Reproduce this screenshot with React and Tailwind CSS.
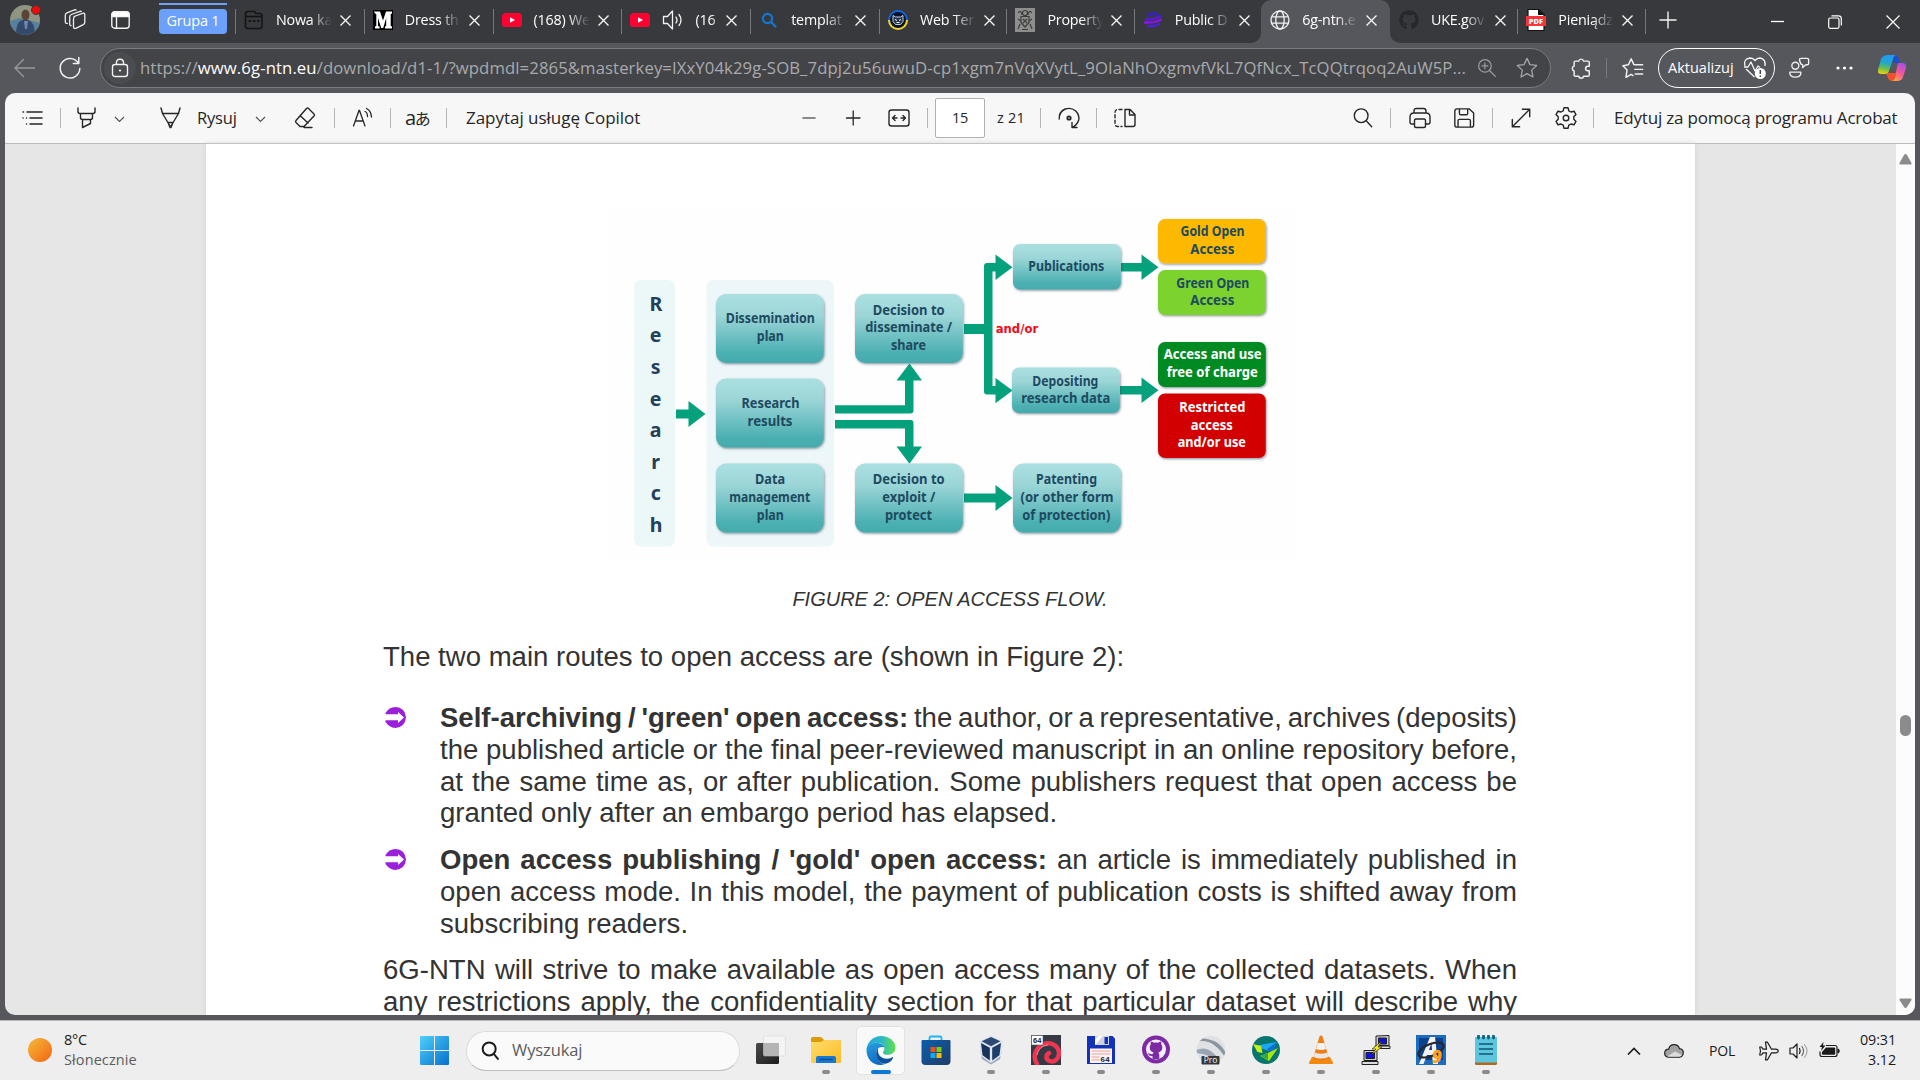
import React from "react";
import { FaGithub } from "react-icons/fa";

const ui = "font-['Open_Sans','Noto_Sans',sans-serif]";

function Icon({ children, className = "", size = 24, sw = 1.3 }) {
  return (
    <svg
      className={`shrink-0 ${className}`}
      width={size}
      height={size}
      viewBox="0 0 24 24"
      fill="none"
      stroke="currentColor"
      strokeWidth={sw}
      strokeLinecap="round"
      strokeLinejoin="round"
    >
      {children}
    </svg>
  );
}

/* ---------- Tab strip ---------- */

const YouTube = () => (
  <svg width="20" height="20" viewBox="0 0 20 20">
    <rect x="0" y="3" width="20" height="14" rx="3.5" fill="#ff0033" />
    <path d="M8 7.2v5.6l5-2.8z" fill="#fff" />
  </svg>
);

const favicons = {
  page: (
    <svg width="20" height="20" viewBox="0 0 20 20" fill="none" stroke="#141416" strokeWidth="1.6">
      <path d="M1.5 4q0-2.500 2.500-2.500h6.500l1.500 2h4q2 0 2 2v10.500q0 2.500-2.500 2.500h-11.500q-2.500 0-2.500-2.500z" />
      <path d="M1.500 6.500h16.500" />
      <path d="M4.500 11h2.500M8.800 11h2.500M13 11h2.500" strokeWidth="2" />
    </svg>
  ),
  m: (
    <div className="flex h-5 w-5 items-center justify-center bg-black">
      <svg width="20" height="20" viewBox="0 0 20 20">
        <path d="M1 1.500h6l3 9 3-9h6v2l-1.300.5v12l1.300.5v2h-7v-2l1.200-.5v-8l-3 10h-2l-3.200-10v8l1.500.5v2h-4.500v-2l1.300-.5v-12l-1.300-.5z" fill="#fff" />
      </svg>
    </div>
  ),
  yt: <YouTube />,
  search: (
    <svg width="20" height="20" viewBox="0 0 20 20" fill="none" stroke="#1377d4" strokeWidth="2.200">
      <circle cx="8.500" cy="8.500" r="4.600" />
      <path d="M12 12l4.500 4.500" strokeLinecap="round" />
    </svg>
  ),
  cat: (
    <svg width="20" height="20" viewBox="0 0 20 20">
      <circle cx="10" cy="10" r="10" fill="#1565e0" />
      <path d="M0 10a10 10 0 0 0 20 0z" fill="#f7d31b" />
      <circle cx="10" cy="10" r="8" fill="#0a1428" />
      <path d="M5 5.500l2.500 1.500h5l2.500-1.500v6l-2.500 3h-5l-2.500-3z" fill="#24344f" stroke="#d8e0ea" strokeWidth=".9" />
      <path d="M7 9.500l2 1M13 9.500l-2 1M8.500 12.500h3" stroke="#fff" strokeWidth="1" />
    </svg>
  ),
  crest: (
    <svg width="20" height="24" viewBox="0 0 20 24" fill="none" stroke="#3c3c3c" strokeWidth="1.200">
      <rect width="20" height="24" fill="#8e8e8e" stroke="none" />
      <circle cx="10" cy="5" r="2.500" />
      <path d="M6 8.500h8v6l-4 4.500-4-4.500zM3 5q3-4 4 2M17 5q-3-4-4 2M3 11l3 2M17 11l-3 2M5 16l-2 5M15 16l2 5M8 11l4 4M12 11l-4 4M7 21.500h6" />
    </svg>
  ),
  swirl: (
    <svg width="20" height="20" viewBox="0 0 20 20" fill="none" strokeLinecap="round">
      <path d="M5 5.500q5-3.500 10-1" stroke="#3320d8" strokeWidth="2.300" />
      <path d="M3 9.500q6 .5 14.500-3" stroke="#5a18e0" strokeWidth="2.300" />
      <path d="M2 12.500q8 1 15.500-2.500" stroke="#8d12f0" strokeWidth="2.300" />
      <path d="M5 16q6 1 11-2" stroke="#4a20dc" strokeWidth="2.300" />
    </svg>
  ),
  globe: (
    <svg width="20" height="20" viewBox="0 0 20 20" fill="none" stroke="#f2f2f2" strokeWidth="1.300">
      <circle cx="10" cy="10" r="9" />
      <ellipse cx="10" cy="10" rx="4.200" ry="9" />
      <path d="M2 6.800h16M2 13.200h16" />
    </svg>
  ),
  github: <FaGithub size={20} color="#24292e" />,
  pdf: (
    <svg width="20" height="22" viewBox="0 0 20 22">
      <path d="M2 .5h11l5 5v16h-16z" fill="#fff" stroke="#111" strokeWidth="1.200" />
      <path d="M12 0v6h6" fill="#111" />
      <rect x="0" y="7" width="20" height="10" fill="#f4353a" />
      <text x="10" y="15" textAnchor="middle" fontSize="7.500" fontWeight="800" fill="#fff" fontFamily="Open Sans, sans-serif">PDF</text>
    </svg>
  ),
};

const tabs = [
  { icon: "page", title: "Nowa ka" },
  { icon: "m", title: "Dress th" },
  { icon: "yt", title: "(168) We" },
  { icon: "yt", title: "(16", audio: true },
  { icon: "search", title: "templat" },
  { icon: "cat", title: "Web Ter" },
  { icon: "crest", title: "Property" },
  { icon: "swirl", title: "Public D" },
  { icon: "globe", title: "6g-ntn.e", active: true },
  { icon: "github", title: "UKE.gov", quiet: true },
  { icon: "pdf", title: "Pieniądz" },
];

function Tab({ icon, title, audio, active, quiet, wide }) {
  return (
    <div className={`relative flex h-[43px] shrink-0 items-center pb-[3px] pl-[9px] ${wide ? "w-[128.8px]" : "w-[127.4px]"} ${active ? "rounded-t-[10px] bg-[#56575c]" : ""}`}>
      {!active && !quiet && <span className="absolute left-0 top-[9px] h-[25px] w-px bg-[#77787b]" />}
      {active && (
        <>
          <svg className="absolute -left-[10px] bottom-0" width="10" height="10"><path d="M10 0v10h-10a10 10 0 0 0 10-10z" fill="#56575c" /></svg>
          <svg className="absolute -right-[10px] bottom-0" width="10" height="10"><path d="M0 0v10h10a10 10 0 0 1-10-10z" fill="#56575c" /></svg>
        </>
      )}
      <span className="flex w-5 shrink-0 justify-center">{favicons[icon]}</span>
      {audio && (
        <svg className="ml-[12px] shrink-0" width="22" height="22" viewBox="0 0 22 22" fill="none" stroke="#f2f2f2" strokeWidth="1.300" strokeLinejoin="round" strokeLinecap="round">
          <path d="M1.500 7.500h4l5-5.500v18l-5-5.500h-4zM14 8q2 3 0 6M17 5.500q4 5.500 0 11" />
        </svg>
      )}
      <span
        className={`whitespace-nowrap text-[14.3px] leading-5 tracking-[-0.2px] text-white ${audio ? "ml-[11px] w-[26px] [mask-image:linear-gradient(to_right,black_60%,#0005)]" : "ml-3 w-[62px] [mask-image:linear-gradient(to_right,black_55%,transparent_90%)]"}`}
      >
        {title}
      </span>
      <svg className="absolute left-[105px] top-[15px]" width="11" height="11" viewBox="0 0 11 11" stroke="#f4f4f4" strokeWidth="1.400">
        <path d="M.5.5l10 10M10.500.5l-10 10" />
      </svg>
    </div>
  );
}

function TabStrip() {
  return (
    <div className="flex h-[43px] items-center bg-[#38393d] text-white">
      <div className="relative mb-[3px] ml-[10px] h-[30px] w-[30px] shrink-0">
        <svg width="30" height="30" viewBox="0 0 30 30">
          <defs><clipPath id="av"><circle cx="15" cy="15" r="15" /></clipPath></defs>
          <g clipPath="url(#av)">
            <rect width="30" height="30" fill="#8f9483" />
            <path d="M0 16l10-3 20 5v12h-30z" fill="#56809c" />
            <path d="M6 30q0-14 7-15h5q7 2 7 15z" fill="#334a6c" />
            <ellipse cx="15.500" cy="10" rx="4" ry="5.500" fill="#5b4436" />
            <path d="M14 16h4l-1 8h-2z" fill="#6d86b5" />
          </g>
        </svg>
        <span className="absolute left-[21px] top-0 h-[10px] w-[10px] rounded-full border border-[#38393d] bg-[#f00a0a]" />
      </div>
      <svg className="mb-[3px] ml-[23px] shrink-0" width="24" height="24" viewBox="0 0 24 24" fill="none" stroke="#eee" strokeWidth="1.300" strokeLinejoin="round">
        <path d="M11 8.500l8.500-3.200q2.300-.7 2.300 1.500v7.500q0 1.700-1.500 2.300l-7 3.500q-2.800 1.200-2.800-1.500v-7.600q0-1.900 1.500-2.500z" />
        <path d="M8.500 17.500q-1.800.5-1.800-1.500v-7q0-1.800 1.600-2.500l8.700-3.200q1-.2 1.500.6" />
        <path d="M4.800 15.200q-2.500.8-2.500-1.500v-6.400q0-1.800 1.600-2.500l7.600-3q1.200-.3 2 .6" />
      </svg>
      <svg className="mb-[3px] ml-[24px] shrink-0" width="19" height="18" viewBox="0 0 19 18" fill="none" stroke="#f4f4f4" strokeWidth="1.400">
        <rect x=".8" y=".8" width="17.400" height="16.400" rx="3" />
        <path d="M1 3.500q0-2.500 2.500-2.500h12q2.500 0 2.500 2.500v2h-17z" fill="#fff" />
        <path d="M5.500 5v12" />
      </svg>
      <div className="ml-[29px] mr-[8px] h-[43px] w-[68px] shrink-0 pt-[3px]">
        <div className="h-[2px] bg-[#6ba0fb]" />
        <div className="mt-[4px] h-[25px] rounded-[4px] bg-[#6ba0fb] text-center text-[14.5px] leading-[23px] tracking-[-0.2px]">Grupa 1</div>
      </div>
      {tabs.map((t, i) => <Tab key={i} wide={i < 5 || t.active} {...t} />)}
      <span className="mb-px h-[25px] w-px bg-[#77787b]" />
      <svg className="mb-[4px] ml-[13px]" width="18" height="18" stroke="#f4f4f4" strokeWidth="1.400"><path d="M9 .5v17M.5 9h17" /></svg>
      <svg className="ml-[94px]" width="13" height="13" stroke="#fff" strokeWidth="1.300"><path d="M0 6.500h13" /></svg>
      <svg className="ml-[44px]" width="14" height="14" viewBox="0 0 14 14" fill="none" stroke="#fff" strokeWidth="1.200">
        <rect x=".7" y="3" width="10.300" height="10.300" rx="1.500" />
        <path d="M3.500.8h7q2.800 0 2.800 2.800v7" />
      </svg>
      <svg className="ml-[44px]" width="14" height="14" stroke="#fff" strokeWidth="1.200"><path d="M.5.5l13 13M13.500.5l-13 13" /></svg>
    </div>
  );
}

/* ---------- Address bar ---------- */

function AddressBar() {
  return (
    <div className="flex h-[50px] items-center bg-[#56575c] text-[#f0f0f0]">
      <Icon className="ml-[13px] text-[#98999c]"><path d="M21.500 12h-19M10.500 3.500l-8.500 8.500 8.500 8.500" /></Icon>
      <Icon className="ml-[21px]" sw={1.5}><path d="M20.800 1.500v6h-5.500M20.300 7a9.800 9.800 0 1 0 1.500 5.500" /></Icon>
      <div className="ml-[18px] flex h-10 w-[1451px] shrink-0 items-center rounded-full border border-[#7b7c80] bg-[#434448]">
        <span className="ml-[3px] flex h-8 w-8 items-center justify-center rounded-full bg-[#4b4c50]">
          <svg width="18" height="20" viewBox="0 0 18 20" fill="none" stroke="#f2f2f2" strokeWidth="1.400">
            <rect x="1.500" y="6.500" width="15" height="12" rx="2.500" />
            <path d="M5.500 6.500v-2q0-3.300 3.500-3.300t3.500 3.300v2" />
            <circle cx="9" cy="12.500" r="1.100" fill="#fff" stroke="none" />
          </svg>
        </span>
        <span className="ml-[4px] w-[1326px] whitespace-nowrap text-[16.7px] leading-6 tracking-[0.105px] text-[#a9aaac]">
          https://<span className="text-white">www.6g-ntn.eu</span>/download/d1-1/?wpdmdl=2865&amp;masterkey=IXxY04k29g-SOB_7dpj2u56uwuD-cp1xgm7nVqXVytL_9OIaNhOxgmvfVkL7QfNcx_TcQQtrqoq2AuW5P...
        </span>
        <Icon size={20} className="ml-[11px] text-[#9b9c9f]" sw={1.5}><circle cx="9.500" cy="9.500" r="7.500" /><path d="M15 15l7 7M9.500 6v7M6 9.500h7" /></Icon>
        <Icon size={22} className="ml-[19px] text-[#a5a6a8]" sw={1.4}><path d="M12 1.500l3.200 6.800 7.300.9-5.400 5.100 1.400 7.500-6.500-3.700-6.500 3.700 1.400-7.500-5.400-5.100 7.300-.9z" /></Icon>
      </div>
      <Icon size={22} className="ml-[19px]" sw={1.6}><path d="M6 4.500h3.500a2.700 2.700 0 0 1 5.300 0h5q1.200 0 1.200 1.200v4.300h-1.500a2.500 2.500 0 0 0 0 5h1.500v4.500q0 1.500-1.200 1.500h-5a2.700 2.700 0 0 1-5.300 0h-3.500q-1.500 0-1.500-1.500v-4.300a2.700 2.700 0 0 1 0-5.200v-4q0-1.500 1.500-1.500z" /></Icon>
      <span className="ml-[14px] h-5 w-px bg-[#7b7c80]" />
      <Icon size={22} className="ml-[15px]" sw={1.6}><path d="M14 8.500l-1-.2-3-6.300-3 6.500-6 1 4.500 4.700-1.200 8 5.700-3.200 2 1.200M15 8.500h7.500M14 13.500h8.500M14.500 18.500h8" /></Icon>
      <div className="ml-[14px] flex h-10 w-[117px] shrink-0 items-center rounded-full border-[1.5px] border-white">
        <span className="ml-[9px] w-[69px] text-[14.5px] tracking-[0px] text-white">Aktualizuj</span>
        <svg className="ml-[6px]" width="24" height="24" viewBox="0 0 24 24" fill="none" stroke="#f5f5f5" strokeWidth="1.300" strokeLinejoin="round">
          <path d="M2 10q-2-7 5-8 3 0 5 2.500 2-2.500 5-2.500 6 1 5 8" />
          <path d="M1 11h4l3-5 4 9 3-5 2 1.500" />
          <path d="M3 13l8.500 8" />
          <circle cx="17.300" cy="17.500" r="5.500" fill="#fff" stroke="none" />
          <path d="M17.300 14v4M17.300 19.500v1.500" stroke="#444" strokeWidth="1.500" />
        </svg>
      </div>
      <Icon size={22} className="ml-[13px]" sw={1.5}>
        <circle cx="8" cy="9.500" r="3.800" /><path d="M2 16.500h12v1q0 4.500-6 4.500t-6-4.500z" />
        <path d="M14 7.500q-1.500-3.500-1.500-4.500 0-1.500 1.500-1.500h7q1.500 0 1.500 1.500v4q0 1.500-1.500 1.500h-1.500l-3.500 3v-3z" />
      </Icon>
      <svg className="ml-[26px]" width="17" height="4"><circle cx="2" cy="2" r="1.600" fill="#fff" /><circle cx="8.500" cy="2" r="1.600" fill="#fff" /><circle cx="15" cy="2" r="1.600" fill="#fff" /></svg>
      <Copilot />
    </div>
  );
}

function Copilot() {
  return (
    <svg className="ml-[25px] shrink-0" width="28" height="27" viewBox="0 0 28 27">
      <defs>
        <linearGradient id="c1" x1=".4" y1="0" x2=".2" y2="1">
          <stop offset="0" stopColor="#1d9bf5" /><stop offset=".4" stopColor="#23a7c9" /><stop offset=".7" stopColor="#6cc04a" /><stop offset="1" stopColor="#f5d011" />
        </linearGradient>
        <linearGradient id="c2" x1=".8" y1="0" x2=".3" y2="1">
          <stop offset="0" stopColor="#a052ee" /><stop offset=".5" stopColor="#f2559c" /><stop offset="1" stopColor="#ffa24a" />
        </linearGradient>
      </defs>
      <path d="M15 1h3q2 0 3 3l1 4h-7z" fill="#1a4fd0" />
      <path d="M8 18l2 5q1 3 4 3h2l2-8z" fill="#f4502a" />
      <path d="M10 0h8q-2 0-3 4l-4 12q-1 3-4 3h-4q-4 0-3-4l3-11q2-4 7-4z" fill="url(#c1)" />
      <path d="M20 8h4q5 0 4 5l-3 9q-1 4-6 4h-6q3 0 4-3l2-11q1-4 1-4z" fill="url(#c2)" />
    </svg>
  );
}

/* ---------- PDF toolbar ---------- */

const Sep = ({ className }) => <span className={`h-5 w-px shrink-0 bg-[#b5b5b5] ${className}`} />;
const Chevron = ({ className }) => (
  <svg className={`shrink-0 ${className}`} width="12" height="24" fill="none" stroke="#555" strokeWidth="1.200"><path d="M2 11l4.500 4.500 4.500-4.500" /></svg>
);

function PdfToolbar() {
  return (
    <div className="flex h-[51px] shrink-0 items-center border-b border-[#bcbcbc] bg-[#f7f7f7] text-[17px] text-[#262626]">
      <Icon className="ml-[15px]"><path d="M7 6h15M10 12h12M10 18h12M3 6h.5M3 12h.1M6.500 12h.1M6.500 18h.1" strokeWidth="1.500" /></Icon>
      <Sep className="ml-[16px]" />
      <Icon className="ml-[14px]" sw={1.4}><path d="M3 2v3.500q0 2 2 2h13q2 0 2-2v-3.500M5.500 7.500v4q0 2 2 2h8q2 0 2-2v-4M7.500 13.500v8l8-4v-4" /></Icon>
      <Chevron className="ml-[14px]" />
      <Icon className="ml-[34px]" sw={1.4}><path d="M2 2l1.500 5.500h16l1.500-5.500M3.500 7.500l7.500 12.500M19.500 7.500l-7.500 12.500M9 16.500h5l-2 5h-1z" /></Icon>
      <span className="ml-[14px] w-[42px] text-[16.5px] tracking-[-0.2px]">Rysuj</span>
      <Chevron className="ml-[15px]" />
      <Icon className="ml-[27px]" sw={1.4}><path d="M13.500 2.500q1-1 2 0l5.500 5.500q1 1 0 2l-10 10.500h-4l-4-4q-1-1 0-2zM7 9.500l8 7.500M11 21.500h8" /></Icon>
      <Sep className="ml-[17px]" />
      <svg className="ml-[17px] shrink-0" width="24" height="24" viewBox="0 0 24 24" fill="none" stroke="#262626" strokeWidth="1.300" strokeLinecap="round">
        <path d="M1.500 20l5.500-15.500h.5l5.500 15.500M3.200 15h8M13 5.500q2.500 1 2.500 5M14.500 2.500q4.500 2 5 8.500" />
      </svg>
      <Sep className="ml-[14px]" />
      <span className="ml-[14px] w-[26px] shrink-0 whitespace-nowrap text-[20px] leading-6 tracking-[-1.500px] font-['Open_Sans','Noto_Sans_CJK_JP',sans-serif]">a<span className="text-[16px]">あ</span></span>
      <Sep className="ml-[15px]" />
      <span className="ml-[19px] w-[178px] shrink-0 whitespace-nowrap tracking-[-0.03px]">Zapytaj usługę Copilot</span>
      <Icon className="ml-[153px] text-[#666]" sw={1.6}><path d="M6 12h12" /></Icon>
      <Icon className="ml-[20px]"><path d="M5.500 12h13.500M12.200 5v14" /></Icon>
      <Icon className="ml-[22px]" sw={1.4}><rect x="2" y="4" width="20" height="16" rx="2.500" /><path d="M5.500 12h4.500M8 9.500l-2.500 2.500 2.500 2.500M18.500 12h-4.500M16 9.500l2.500 2.500-2.500 2.500" /></Icon>
      <Sep className="ml-[16px]" />
      <span className="ml-[7px] flex h-10 w-[50px] shrink-0 items-center justify-center rounded-[2px] border border-[#b0b0b0] bg-white text-[14.5px] tracking-[-0.3px]">15</span>
      <span className="ml-[12px] w-[30px] shrink-0 whitespace-nowrap text-[14.5px] tracking-[0.2px]">z 21</span>
      <Sep className="ml-[13px]" />
      <Icon className="ml-[16px]" sw={1.4}><path d="M2.200 13q-.5-7 6-10 6-2 10.500 2 4 4 3 9-1.500 5-6.500 7.500M20 21.500h-5v-5" /><circle cx="12" cy="12" r="1.700" strokeWidth="1.800" /></Icon>
      <Sep className="ml-[15px]" />
      <Icon className="ml-[16px]" sw={1.4}><path d="M12 3.500h5l5 5v10q0 2-2 2h-8zM16.500 3.500v5.500h5.500" /><path d="M9 3.500h-4q-3 0-3 3v11q0 3 3 3h4" strokeDasharray="3 2.500" /></Icon>
      <Icon size={22} className="ml-[215px]" sw={1.5}><circle cx="10" cy="9.500" r="7.500" /><path d="M15.500 15l6 6.500" /></Icon>
      <Sep className="ml-[16px]" />
      <Icon className="ml-[17px]" sw={1.4}><path d="M6 7v-2q0-2.500 2.500-2.500h7q2.500 0 2.500 2.500v2M6 18h-2q-2 0-2-2v-5q0-4 4-4h12q4 0 4 4v5q0 2-2 2h-2" /><rect x="6.500" y="13" width="11" height="8.500" rx="1.500" /></Icon>
      <Icon size={22} className="ml-[21px]" sw={1.5}><path d="M4.500 2h13l5 4.500v13q0 2.500-2.500 2.500h-15.500q-2.500 0-2.500-2.500v-15q0-2.500 2.500-2.500zM7 2v5q0 1.500 1.500 1.500h6q1.500 0 1.500-1.500v-5M5.500 22v-7q0-1.500 1.500-1.500h10.500q1.500 0 1.500 1.500v7" /></Icon>
      <Sep className="ml-[17px]" />
      <Icon size={22} className="ml-[17px]" sw={1.5}><path d="M2.500 21.500l19-19M13.500 2.500h8v8M2.500 13.500v8h8" /></Icon>
      <Icon className="ml-[22px]" sw={1.4}>
        <circle cx="12" cy="12" r="2.800" />
        <path d="M10 1.800h4l.8 3 2.200 1.200 3-.8 2 3.400-2.200 2.200v2.400l2.200 2.200-2 3.400-3-.8-2.200 1.200-.8 3h-4l-.8-3-2.200-1.200-3 .8-2-3.400 2.200-2.200v-2.400l-2.200-2.200 2-3.400 3 .8 2.200-1.200z" />
      </Icon>
      <Sep className="ml-[15px]" />
      <span className="ml-[20px] shrink-0 whitespace-nowrap tracking-[-0.19px]">Edytuj za pomocą programu Acrobat</span>
    </div>
  );
}

/* ---------- Open access flow figure ---------- */

const GREEN = "#05a17c";

const nodes = [
  { x: 116, y: 94, h: 69, lines: [["Dissemination", 170.3, 123.3, 89], ["plan", 170.3, 141, 27]] },
  { x: 116, y: 178.5, h: 69, lines: [["Research", 170.5, 208.3, 58], ["results", 170, 226, 45]] },
  { x: 116, y: 263.5, h: 69, lines: [["Data", 170, 284.3, 30], ["management", 169.7, 302, 81], ["plan", 170.3, 319.7, 27]] },
  { x: 255, y: 94, h: 69, lines: [["Decision  to", 308.7, 114.7, 72], ["disseminate  /", 308.7, 132.3, 87], ["share", 308.5, 150, 35]] },
  { x: 255, y: 263.5, h: 69, lines: [["Decision  to", 308.7, 284.3, 72], ["exploit  /", 308.8, 302, 53], ["protect", 308.5, 319.7, 47]] },
  { x: 413, y: 44, h: 45.5, lines: [["Publications", 466.3, 71, 76]] },
  { x: 412, y: 167.5, h: 45.5, lines: [["Depositing", 465.3, 185.5, 66], ["research  data", 465.7, 203.3, 89]] },
  { x: 413, y: 263.5, h: 69, lines: [["Patenting", 466.5, 284.3, 61], ["(or  other  form", 467, 302, 93], ["of  protection)", 466.3, 319.7, 88]] },
  { x: 558, y: 19, h: 44.5, fill: "#fcb900", lines: [["Gold  Open", 612.5, 36, 64], ["Access", 612.3, 54, 44]] },
  { x: 558, y: 70, h: 45, fill: "#7bd32f", lines: [["Green  Open", 612.8, 87.5, 73], ["Access", 612.3, 105, 44]] },
  { x: 558, y: 142, h: 45, fill: "#048b22", color: "#fff", lines: [["Access  and  use", 612.7, 159.3, 98], ["free  of  charge", 612.2, 177, 91]] },
  { x: 558, y: 193.5, h: 64.5, fill: "#d20202", color: "#fff", lines: [["Restricted", 612.3, 211.500, 66], ["access", 611.7, 229.500, 42], ["and/or  use", 611.8, 246.500, 68]] },
];

function FlowFigure() {
  return (
    <svg width="700" height="370" viewBox="0 0 700 370" fontFamily="Noto Sans, Open Sans, sans-serif" fontWeight="700">
      <defs>
        <linearGradient id="teal" x1="0" y1="0" x2="0" y2="1">
          <stop offset="0" stopColor="#abe0e1" /><stop offset=".3" stopColor="#9dd6d8" /><stop offset=".85" stopColor="#4cb0b2" /><stop offset="1" stopColor="#44abad" />
        </linearGradient>
        <filter id="shade" x="-10%" y="-10%" width="120%" height="125%">
          <feDropShadow dx=".8" dy="1.200" stdDeviation=".9" floodColor="#345" floodOpacity=".55" />
        </filter>
      </defs>
      <rect x="6" y="8" width="688" height="350" fill="#fefefe" />
      <rect x="34" y="80" width="41" height="266.500" rx="7" fill="#ecf7f8" />
      <rect x="106.500" y="80" width="127.500" height="266.500" rx="7" fill="#edf6f8" />
      {"Research".split("").map((c, i) => (
        <text key={i} x={i === 0 || i === 7 ? 56 : 55.700} y={110.700 + i * 31.600} fontSize="19.500" textAnchor="middle" fill="#233f59">{c}</text>
      ))}
      <g fill={GREEN}>
        <path d="M76 209.500h12.500v-8.500l17 13-17 13v-8.500h-12.500z" />
        <path d="M235 205.300h70v-24.800h-8.500l13-17 12.500 17h-8.500v30q0 3-3 3h-75.500z" />
        <path d="M235 220h75.500q3 0 3 3v23.500h8.500l-12.500 17.300-13-17.300h8.500v-18h-70z" />
        <path d="M364 124h20v-58q0-3 3-3h8.500v-8.500l17 12.800-17 12.700v-8.500h-3v107.500q0 7.500 0 7h3v-8l17 12.500-17 12.700v-8.700h-8.500q-3 0-3-3v-57.500h-20z" />
        <path d="M521 63h20.500v-8.500l17 12.800-17 12.700v-8.500h-20.500z" />
        <path d="M520 186h21.500v-8.500l17 12.800-17 12.700v-8.500h-21.500z" />
        <path d="M364 293.500h31.500v-8.500l17 13-17 13v-8.500h-31.500z" />
      </g>
      {nodes.map((n, i) => (
        <g key={i}>
          <rect x={n.x} y={n.y} width="107.800" height={n.h} rx={n.h > 50 && !n.fill ? 10 : 7} fill={n.fill || "url(#teal)"} filter="url(#shade)" />
          {n.lines.map(([t, x, y, w], j) => (
            <text key={j} x={x} y={y} fontSize="15" textAnchor="middle" textLength={w} lengthAdjust="spacingAndGlyphs" fill={n.color || "#1d4a60"}>{t}</text>
          ))}
        </g>
      ))}
      <text x="395.700" y="133" fontSize="11.500" textLength="42.500" lengthAdjust="spacingAndGlyphs" fill="#f3091b" fontFamily="DejaVu Sans, sans-serif">and/or</text>
    </svg>
  );
}

/* ---------- Document ---------- */

const Line = ({ children, last, tight }) => (
  <div className={`h-[31.7px] whitespace-nowrap ${last ? "" : "[text-align-last:justify]"} ${tight ? "[word-spacing:-2.5px]" : ""}`}>{children}</div>
);

const Bullet = () => (
  <svg className="ml-[2px] mt-[5px] shrink-0" width="21" height="21" viewBox="0 0 21 21">
    <path d="M.5 6q3.500-6 10-6 9.500.5 10.500 10.500-1 9.500-10.500 10.500-6.500-.5-10-6z" fill="#9a20dc" />
    <path d="M0 7.300h13v-2.300l6 5.500-6 5.500v-2.700h-13z" fill="#fff" />
  </svg>
);

function Document() {
  return (
    <div className="flex min-h-0 flex-1 bg-[#e6e6e6]">
      <div className="ml-[201px] h-full w-[1489px] shrink-0 overflow-hidden bg-white pl-[177px] pt-[56px] font-['Liberation_Sans',Arial,sans-serif] text-[27.55px] leading-[31.7px] text-[#333] shadow-[0_0_5px_#cfcfcf]">
        <div className="ml-[217px] h-[370px] w-[700px]"><FlowFigure /></div>
        <div className="mt-[17px] w-[1134px] text-center text-[20px] italic leading-6">FIGURE 2: OPEN ACCESS FLOW.</div>
        <div className="mt-[30px] w-[1134px]"><Line last>The two main routes to open access are (shown in Figure 2):</Line></div>
        <div className="mt-[29.5px] flex w-[1134px]">
          <Bullet />
          <div className="ml-[34px] w-[1077px] shrink-0">
            <Line tight><b>Self-archiving / 'green' open access:</b> the author, or a representative, archives (deposits)</Line>
            <Line>the published article or the final peer-reviewed manuscript in an online repository before,</Line>
            <Line>at the same time as, or after publication. Some publishers request that open access be</Line>
            <Line last>granted only after an embargo period has elapsed.</Line>
          </div>
        </div>
        <div className="mt-[15.2px] flex w-[1134px]">
          <Bullet />
          <div className="ml-[34px] w-[1077px] shrink-0">
            <Line>
              <b>Open access publishing / 'gold' open access:</b> an article is immediately published in
            </Line>
            <Line>open access mode. In this model, the payment of publication costs is shifted away from</Line>
            <Line last>subscribing readers.</Line>
          </div>
        </div>
        <div className="mt-[15px] w-[1134px]">
          <Line>6G-NTN will strive to make available as open access many of the collected datasets. When</Line>
          <Line>any restrictions apply, the confidentiality section for that particular dataset will describe why</Line>
        </div>
      </div>
      <div className="ml-auto flex w-[19px] flex-col items-center bg-[#fcfcfc] pb-[7px] pt-[10px]">
        <svg width="13" height="11"><path d="M6.500 0q1 0 1.500 1l4.500 8q.5 1.500-1 1.500h-10q-1.500 0-1-1.500l4.500-8q.5-1 1.500-1z" fill="#8b8b8b" /></svg>
        <span className="mt-[550px] h-[21px] w-[11px] rounded-full bg-[#8b8b8b]" />
        <svg className="mt-auto" width="13" height="10"><path d="M6.500 10q1 0 1.500-1l4.500-7q.5-1.500-1-1.500h-10q-1.500 0-1 1.500l4.500 7q.5 1 1.500 1z" fill="#8b8b8b" /></svg>
      </div>
    </div>
  );
}

/* ---------- Taskbar ---------- */

const P = (props) => <svg width="30" height="30" viewBox="0 0 30 30" {...props} />;

const apps = [
  {
    el: (
      <P>
        <defs><linearGradient id="tv" x1="0" y1="0" x2="1" y2="1"><stop offset="0" stopColor="#4a4a4a" /><stop offset="1" stopColor="#1b1b1b" /></linearGradient></defs>
        <rect x="0" y="8" width="23" height="21" rx="1.500" fill="url(#tv)" />
        <rect x="7.500" y="1" width="22" height="20" rx="1.500" fill="#f6f6f6" fillOpacity=".75" stroke="#d0d0d0" strokeWidth=".5" />
        <rect x="8" y="8" width="15" height="13" fill="#b5b5b5" />
      </P>
    ),
  },
  {
    dot: true,
    el: (
      <P>
        <defs><linearGradient id="fo" x1="0" y1="0" x2="1" y2="1"><stop offset="0" stopColor="#ffdc6b" /><stop offset="1" stopColor="#fcbd27" /></linearGradient></defs>
        <path d="M0 3.500q0-1.500 1.500-1.500h8q1 0 1.500.7l2 2.300h15.500q1.500 0 1.500 1.500v6h-30z" fill="#dc9b0a" />
        <path d="M0 7h10l3-2h15.500q1.500 0 1.500 1.500v20q0 1.500-1.500 1.500h-27q-1.500 0-1.500-1.500z" fill="url(#fo)" />
        <path d="M5 28v-5q0-2 2-2h16q2 0 2 2v5z" fill="#1877cf" />
        <path d="M9 24.500h12" stroke="#0c4f96" strokeWidth="1.300" strokeLinecap="round" />
      </P>
    ),
  },
  {
    active: true,
    el: (
      <P>
        <defs>
          <linearGradient id="e1" x1="0" y1=".5" x2="1" y2=".5"><stop offset="0" stopColor="#1fa6dc" /><stop offset=".5" stopColor="#2bb8c8" /><stop offset="1" stopColor="#62e045" /></linearGradient>
          <linearGradient id="e2" x1="0" y1="0" x2=".3" y2="1"><stop offset="0" stopColor="#2a9fe0" /><stop offset="1" stopColor="#0f6cc4" /></linearGradient>
        </defs>
        <path d="M0 14c1-9 8-14 15-14 9 0 15 6 15 12 0 5-4 7.500-8 7.500-3 0-5-1-5-2.500 0-1 1.500-1.500 1.500-4 0-3-3-6-8-6-4 0-8 2-10.500 7z" fill="url(#e1)" />
        <path d="M0 15c0-5 5-8 10-8 4.500 0 8 2.500 8.500 5-5-2-9 2-8.500 7 .5 6 5 10 9 10-2 1-3 1-5 1-8 0-14-7-14-15z" fill="url(#e2)" />
        <path d="M12 13c-3 3-3 10 2 14 4 3 9 1.500 12-2 1-1 2-3 1.500-3.300s-2.500 1.800-6.500 1.800c-6 0-10-4-9-10.500z" fill="#0d529c" />
      </P>
    ),
  },
  {
    el: (
      <P>
        <defs><linearGradient id="st" x1="0" y1="0" x2="1" y2="1"><stop offset="0" stopColor="#0c5fae" /><stop offset="1" stopColor="#203c66" /></linearGradient></defs>
        <path d="M8.500 6v-3q0-1.500 1.500-1.500h9q1.500 0 1.500 1.500v3" fill="none" stroke="#22b4f0" strokeWidth="1.800" />
        <path d="M.5 6q0-1 1-1h27q1 0 1 1v20q0 4-4 4h-21q-4 0-4-4z" fill="url(#st)" />
        <path d="M9.500 12h5v5h-5z" fill="#f1511b" /><path d="M15.500 12h5v5h-5z" fill="#80cc08" />
        <path d="M9.500 18h5v5h-5z" fill="#12a9f0" /><path d="M15.500 18h5v5h-5z" fill="#fbbc09" />
      </P>
    ),
  },
  {
    dot: true,
    el: (
      <P>
        <path d="M4 15l2 9 9 5.500 9-5.500 2-9z" fill="#9aa7bb" />
        <path d="M15 .5l12 5.500-2 15-10 7-10-7-2-15z" fill="#dfe6ef" />
        <path d="M15 2l9.500 4.300-9.500 5-9.500-5z" fill="#2c4a73" />
        <path d="M5 8l8.800 4.800v12.700l-7.300-5.200z" fill="#17335a" /><path d="M25 8l-8.800 4.800v12.700l7.300-5.200z" fill="#1d3f6c" />
      </P>
    ),
  },
  {
    dot: true,
    el: (
      <P>
        <rect width="30" height="30" fill="#343944" />
        <path d="M6 29c-5-8-1-17 7-20 8-2.500 14 2 15 8 .5 7-5 11-9.500 9-4-1.500-4-6-.5-8" fill="none" stroke="#f03552" strokeWidth="4.500" strokeLinecap="round" />
        <path d="M6 20c1-6 6-10 11-10" fill="none" stroke="#ff8d9c" strokeWidth=".9" />
        <rect x=".5" y=".5" width="11.500" height="9.500" fill="#fff" stroke="#555" strokeWidth=".6" />
        <text x="6.200" y="8" fontSize="7.500" fontWeight="700" textAnchor="middle" fill="#222" fontFamily="Liberation Sans, sans-serif">64</text>
      </P>
    ),
  },
  {
    dot: true,
    el: (
      <P>
        <path d="M1 1h25.500l2.500 2.500v25.500h-28z" fill="#1233b8" />
        <path d="M9 1h14v9h-14z" fill="#cfd2da" /><path d="M9 10l8-9h-5l-3 4z" fill="#fff" /><rect x="18.500" y="2" width="3.500" height="7" fill="#1233b8" />
        <rect x="4" y="13.500" width="22" height="14.500" fill="#fdf4f4" />
        <path d="M5.500 16h19M5.500 19h19M5.500 22h8M5.500 25h8" stroke="#f4b9b9" strokeWidth="1.300" />
        <text x="19" y="27" fontSize="8" fontWeight="700" textAnchor="middle" fill="#222" fontFamily="Liberation Mono, monospace">64</text>
      </P>
    ),
  },
  {
    dot: true,
    el: (
      <P>
        <circle cx="15" cy="14.500" r="14" fill="#7c2ba5" /><circle cx="15" cy="14.500" r="10" fill="#f4eef8" />
        <path d="M11.500 24v-3q-4 .5-4.500-3 2.500 1.500 4.700 1 .3-1 1-1.500-4-1-4-5 0-2 1-3-.3-1.500.3-3 1.800.3 3 1.300 2-.5 4 0 1.200-1 3-1.300.6 1.500.3 3 1 1 1 3 0 4-4 5 1 1 1 2.500v4z" fill="#7c2ba5" />
      </P>
    ),
  },
  {
    dot: true,
    el: (
      <P>
        <defs><clipPath id="ge"><circle cx="15" cy="15" r="14.300" /></clipPath></defs>
        <g clipPath="url(#ge)">
          <rect width="30" height="30" fill="#dfe1e4" />
          <path d="M0 7q10-3 18 3 7 5 12 14v-6q-6-11-15-13-9-3-15-1z" fill="#8a95a2" />
          <path d="M0 15q9-4 16 2 5 4 8 8l-3 3q-6-9-21-10z" fill="#9ba5b1" />
        </g>
        <rect x="5.500" y="21" width="18" height="8.500" rx="1" fill="#33363a" />
        <text x="14.500" y="28.300" fontSize="8.500" textAnchor="middle" fill="#fff" fontFamily="Open Sans, sans-serif">Pro</text>
      </P>
    ),
  },
  {
    dot: true,
    el: (
      <P>
        <circle cx="15" cy="15" r="14" fill="#08766c" />
        <path d="M3 11l23-4-4 10z" fill="#1ca8f2" /><path d="M26 7l-10 7 6 5z" fill="#0b6fd0" />
        <path d="M2 9l8 2 1.500 7-5-1z" fill="#c6f312" /><path d="M27 13l-9 13-9-5 8-3z" fill="#a5e80c" /><path d="M17 18l-8 3 8 4z" fill="#35a84a" />
      </P>
    ),
  },
  {
    dot: true,
    el: (
      <P>
        <path d="M6 22h18l3 5.500q.3 1.500-1 1.500h-22q-1.300 0-1-1.500z" fill="#f28a12" />
        <path d="M13.500 1.500q1.500-2 3 0l6.500 22q-8 4-16 0z" fill="#f07d10" />
        <path d="M11.700 8h6.600l1.600 6q-5 2-9.800 0z" fill="#f3f3f3" /><path d="M8.800 17.500q6 2.500 12.400 0l1.300 4.500q-7.500 3-15 0z" fill="#e8e8e8" />
      </P>
    ),
  },
  {
    dot: true,
    el: (
      <P stroke="#222" strokeWidth="1">
        <path d="M15 1l13-.500v10h-13z" fill="#cfcfcf" /><path d="M17.500 3h8v6h-8z" fill="#1212e0" />
        <path d="M14 11h15v2.500h-15z" fill="#ddd" />
        <path d="M3 15.500h13v10h-13z" fill="#cfcfcf" /><path d="M5 17.500h8.500v6h-8.500z" fill="#1212e0" />
        <path d="M1 26.500h16v3h-16z" fill="#ddd" />
        <path d="M21 6l-10 8h4l-5 6 11-8h-4z" fill="#f8ee12" strokeWidth=".6" />
      </P>
    ),
  },
  {
    dot: true,
    el: (
      <P>
        <rect width="30" height="30" fill="#1b6bc0" /><rect x="3" y="3" width="24" height="22" fill="#0d418c" />
        <path d="M3 29l11-27h5l3 27h-5l-1-9h-5l-3.500 9zM13 15h3l-.5-7z" fill="#f3f3f3" fillRule="evenodd" />
        <ellipse cx="15" cy="15" rx="13.500" ry="6" transform="rotate(-22 15 15)" fill="none" stroke="#25272c" strokeWidth="2.200" />
        <text x="21" y="28" fontSize="17" fontWeight="800" fontStyle="italic" textAnchor="middle" fill="#ffa21a" fontFamily="Open Sans, sans-serif">9</text>
      </P>
    ),
  },
  {
    dot: true,
    el: (
      <P>
        <rect x="4" y="2" width="22" height="28" rx="1.500" fill="#b3681c" /><rect x="4" y="2" width="22" height="25.500" rx="1" fill="#5cc6de" />
        <path d="M8 9h14M8 14h14M8 19h14" stroke="#0e5571" strokeWidth="1.700" />
        <path d="M7.500 1v2M12.500 1v2M17.500 1v2M22.500 1v2" stroke="#10607e" strokeWidth="2.800" strokeLinecap="round" />
      </P>
    ),
  },
];

function Taskbar() {
  return (
    <div className="flex h-[60px] items-center border-t border-[#b8b8b8] bg-[#eee] text-[#1b1b1b]">
      <span className="mb-[2px] ml-[28px] h-6 w-6 shrink-0 rounded-full bg-gradient-to-br from-[#f4b93c] to-[#f0620a]" />
      <div className="ml-[12px] w-[90px] shrink-0 pb-px text-[14.5px] leading-5">
        <div className="tracking-[-0.3px]">8°C</div>
        <div className="tracking-[0.1px] text-[#5c5c5c]">Słonecznie</div>
      </div>
      <svg className="ml-[266px] shrink-0" width="29" height="29" viewBox="0 0 29 29">
        <defs><linearGradient id="win" gradientUnits="userSpaceOnUse" x1="0" y1="0" x2="29" y2="29"><stop offset="0" stopColor="#4fd0fb" /><stop offset="1" stopColor="#0670cc" /></linearGradient></defs>
        <path d="M0 1q0-1 1-1h13v14h-14zM15 0h13q1 0 1 1v13h-14zM0 15h14v14h-13q-1 0-1-1zM15 15h14v13q0 1-1 1h-13z" fill="url(#win)" />
      </svg>
      <div className="ml-[17px] flex h-10 w-[274px] shrink-0 items-center rounded-full border border-[#dcdcdc] border-b-[#bdbdbd] bg-[#fafafa]">
        <Icon size={20} className="ml-[13px]" sw={2.4}><circle cx="11" cy="9.500" r="7.800" /><path d="M16.500 15.500l5 6" /></Icon>
        <span className="ml-[12px] text-[16.5px] tracking-[-0.1px] text-[#5c5c5c]">Wyszukaj</span>
      </div>
      <div className="ml-[3px] flex">
        {apps.map((a, i) => (
          <div key={i} className="flex h-[59px] w-[55px] shrink-0 justify-center pt-[5px]">
            <div className={`flex h-[49px] w-[49px] flex-col items-center rounded-[5px] pt-[9px] ${a.active ? "border border-[#e2e2e2] bg-[#f9f9f9] pt-[8px]" : ""}`}>
              {a.el}
              {a.active && <span className="mt-[5px] h-1 w-5 shrink-0 rounded-full bg-[#0a78d4]" />}
              {a.dot && <span className="mt-[5px] h-1 w-2 shrink-0 rounded-full bg-[#8a8a8a]" />}
            </div>
          </div>
        ))}
      </div>
      <svg className="ml-[114px]" width="14" height="8" fill="none" stroke="#1b1b1b" strokeWidth="1.600"><path d="M1 7.500l6-6 6 6" /></svg>
      <svg className="ml-[23px]" width="20" height="14" viewBox="0 0 20 14">
        <path d="M5 13.200q-4.300-.2-4.300-4t4-4q1-4.500 5.300-4.500t5.500 4q3.800.4 3.800 4t-3.800 4.500z" fill="#a2a2a2" stroke="#222" strokeWidth="1.200" />
        <path d="M3 12.500l8-5 7 3.500q-.5 1.500-3 1.700h-10z" fill="#dcdcdc" />
      </svg>
      <span className="ml-[25px] w-[29px] text-[14px] tracking-[-0.2px]">POL</span>
      <svg className="ml-[21px]" width="20" height="20" viewBox="0 0 20 20" fill="none" stroke="#1b1b1b" strokeWidth="1.200" strokeLinejoin="round">
        <path d="M6 8.200l1.500 0-1-7h2l4 7h4.500q2.300.3 2.300 1.800t-2.300 1.800h-4.500l-4 7h-2l1-7h-3.500l-1.500 2.200h-1.800l.8-4-.8-4h1.800l1.500 2.200z" />
      </svg>
      <svg className="ml-[10px]" width="21" height="18" viewBox="0 0 21 18" fill="none" strokeWidth="1.200" strokeLinecap="round" strokeLinejoin="round">
        <path d="M1 6h3l4-4v14l-4-4h-3zM10.500 6.500q1.300 2.500 0 5" stroke="#1b1b1b" />
        <path d="M13 4.500q3 4.500 0 9" stroke="#1b1b1b" opacity=".6" /><path d="M15.500 2.500q5 6.500 0 13" stroke="#aaa" />
      </svg>
      <svg className="ml-[9px]" width="21" height="18" viewBox="0 0 21 18">
        <path d="M7 3.500h9q2 0 2 2v7q0 2-2 2h-13q-2 0-2-2v-3" fill="none" stroke="#1b1b1b" strokeWidth="1.200" />
        <path d="M7 5.500h8q1.200 0 1.200 1v5q0 1.200-1.200 1.200h-11q-1.200 0-1.200-1.200l.2-1.500z" fill="#1b1b1b" />
        <path d="M19 7q1.200 0 1.200 2t-1.200 2z" fill="#1b1b1b" stroke="#1b1b1b" /><path d="M4.500 0l-4 5h2.500l-1 4 4.500-5.500h-2.500z" fill="#1b1b1b" />
      </svg>
      <div className="ml-auto mr-[24px] pb-px text-right text-[14.3px] leading-5 tracking-[-0.1px]">
        <div>09:31</div>
        <div>3.12</div>
      </div>
    </div>
  );
}

export default function App() {
  return (
    <div className={`flex h-[1080px] w-[1920px] flex-col overflow-hidden bg-[#56575c] ${ui}`}>
      <TabStrip />
      <AddressBar />
      <div className="mx-[5px] mb-[5px] flex min-h-0 flex-1 flex-col overflow-hidden rounded-[10px]">
        <PdfToolbar />
        <Document />
      </div>
      <Taskbar />
    </div>
  );
}
